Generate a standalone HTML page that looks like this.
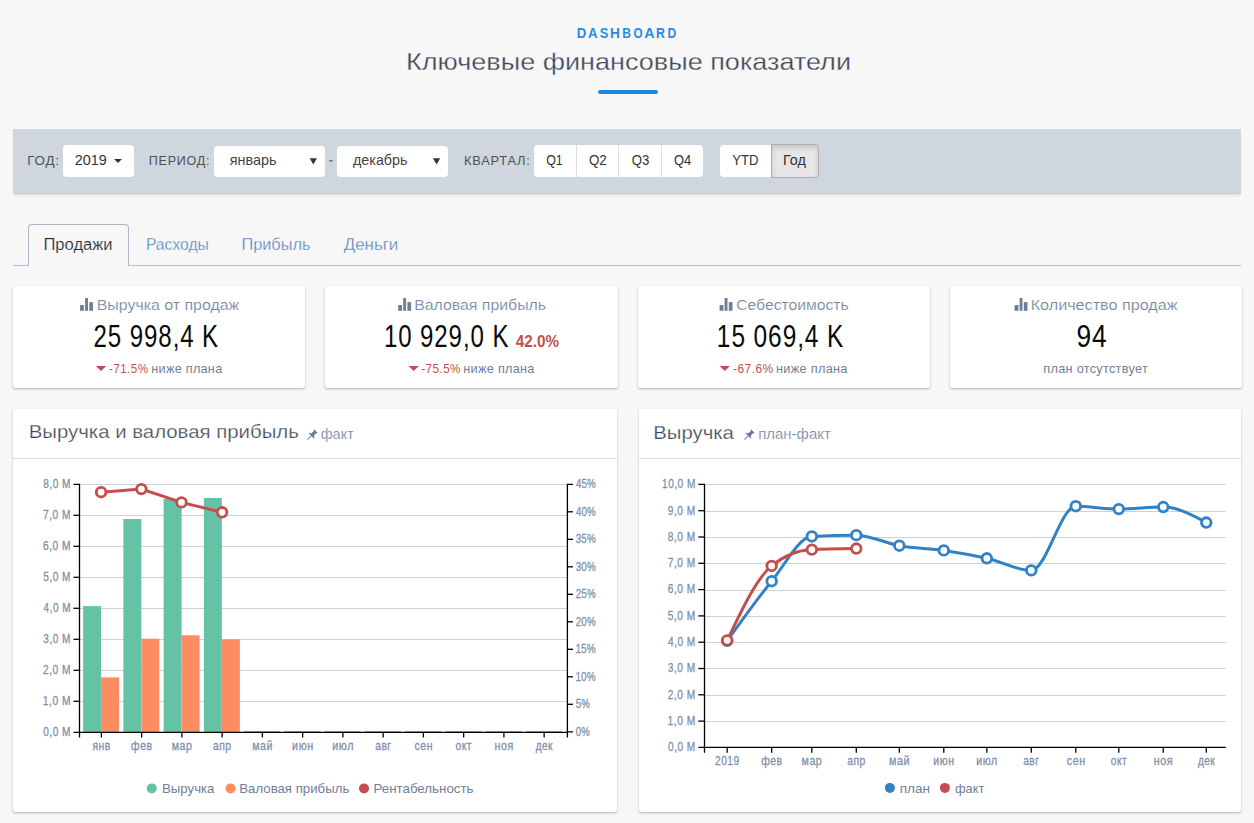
<!DOCTYPE html>
<html><head><meta charset="utf-8"><title>Dashboard</title>
<style>
html,body{margin:0;padding:0;width:1254px;height:823px;overflow:hidden;background:#f7f7f7;font-family:"Liberation Sans",sans-serif}
svg text{font-family:"Liberation Sans",sans-serif}
</style></head><body>
<div style="position:absolute;left:598px;top:90px;width:60px;height:4px;background:#1a86e0;border-radius:2px"></div>
<div style="position:absolute;left:13px;top:129px;width:1228px;height:65px;background:#cfd6dd;box-shadow:inset 0 -1px 0 rgba(0,0,0,.04), 0 3px 3px -1px rgba(0,0,0,.09)"></div>
<div style="position:absolute;left:63px;top:145px;width:71px;height:32px;background:#fff;border-radius:4px"></div>
<div style="position:absolute;left:214px;top:146px;width:111px;height:31px;background:#fff;border-radius:4px"></div>
<div style="position:absolute;left:337px;top:146px;width:111px;height:31px;background:#fff;border-radius:4px"></div>
<div style="position:absolute;left:534px;top:145px;width:169px;height:32px;background:#fff;border-radius:4px"></div>
<div style="position:absolute;left:576px;top:145px;width:1px;height:32px;background:#ddd"></div>
<div style="position:absolute;left:618px;top:145px;width:1px;height:32px;background:#ddd"></div>
<div style="position:absolute;left:661px;top:145px;width:1px;height:32px;background:#ddd"></div>
<div style="position:absolute;left:720px;top:145px;width:98px;height:32px;background:#fff;border-radius:4px"></div>
<div style="position:absolute;left:771px;top:144px;width:48px;height:34px;background:#e6e6e6;border:1px solid #adadad;border-radius:0 4px 4px 0;box-shadow:inset 0 3px 5px rgba(0,0,0,.125);box-sizing:border-box"></div>
<div style="position:absolute;left:13px;top:265px;width:1228px;height:1px;background:#b8c2cd"></div>
<div style="position:absolute;left:28px;top:224px;width:101px;height:42px;background:#f7f7f7;border:1px solid #aab6c3;border-bottom:none;border-radius:4px 4px 0 0;box-sizing:border-box"></div>
<div style="position:absolute;left:13.0px;top:286px;width:292.25px;height:102px;background:#fff;border-radius:2px;box-shadow:0 1px 3px rgba(0,0,0,.10), 0 1px 2px rgba(0,0,0,.20)"></div>
<div style="position:absolute;left:325.25px;top:286px;width:292.25px;height:102px;background:#fff;border-radius:2px;box-shadow:0 1px 3px rgba(0,0,0,.10), 0 1px 2px rgba(0,0,0,.20)"></div>
<div style="position:absolute;left:637.5px;top:286px;width:292.25px;height:102px;background:#fff;border-radius:2px;box-shadow:0 1px 3px rgba(0,0,0,.10), 0 1px 2px rgba(0,0,0,.20)"></div>
<div style="position:absolute;left:949.75px;top:286px;width:292.25px;height:102px;background:#fff;border-radius:2px;box-shadow:0 1px 3px rgba(0,0,0,.10), 0 1px 2px rgba(0,0,0,.20)"></div>
<div style="position:absolute;left:13px;top:409px;width:604px;height:403px;background:#fff;border-radius:2px;box-shadow:0 1px 3px rgba(0,0,0,.10), 0 1px 2px rgba(0,0,0,.20)"></div>
<div style="position:absolute;left:639px;top:409px;width:602px;height:403px;background:#fff;border-radius:2px;box-shadow:0 1px 3px rgba(0,0,0,.10), 0 1px 2px rgba(0,0,0,.20)"></div>
<div style="position:absolute;left:13px;top:458px;width:604px;height:1px;background:#dcdcdc"></div>
<div style="position:absolute;left:639px;top:458px;width:602px;height:1px;background:#dcdcdc"></div>
<svg width="1254" height="823" style="position:absolute;left:0;top:0">
<text x="576.86" y="37.90" font-size="14.00" fill="#2a8ae0" font-weight="bold" textLength="9.52" lengthAdjust="spacingAndGlyphs">D</text>
<text x="587.98" y="37.90" font-size="14.00" fill="#2a8ae0" font-weight="bold" textLength="9.58" lengthAdjust="spacingAndGlyphs">A</text>
<text x="599.72" y="37.90" font-size="14.00" fill="#2a8ae0" font-weight="bold" textLength="8.61" lengthAdjust="spacingAndGlyphs">S</text>
<text x="610.09" y="37.90" font-size="14.00" fill="#2a8ae0" font-weight="bold" textLength="9.88" lengthAdjust="spacingAndGlyphs">H</text>
<text x="622.14" y="37.90" font-size="14.00" fill="#2a8ae0" font-weight="bold" textLength="8.73" lengthAdjust="spacingAndGlyphs">B</text>
<text x="633.45" y="37.90" font-size="14.00" fill="#2a8ae0" font-weight="bold" textLength="9.08" lengthAdjust="spacingAndGlyphs">O</text>
<text x="644.21" y="37.90" font-size="14.00" fill="#2a8ae0" font-weight="bold" textLength="10.35" lengthAdjust="spacingAndGlyphs">A</text>
<text x="655.89" y="37.90" font-size="14.00" fill="#2a8ae0" font-weight="bold" textLength="8.93" lengthAdjust="spacingAndGlyphs">R</text>
<text x="667.41" y="37.90" font-size="14.00" fill="#2a8ae0" font-weight="bold" textLength="8.69" lengthAdjust="spacingAndGlyphs">D</text>
<text x="405.98" y="69.50" font-size="24.20" fill="#3d4858" stroke="#f7f7f7" stroke-width="0.3" textLength="445.05" lengthAdjust="spacingAndGlyphs">Ключевые финансовые показатели</text>
<text x="27.26" y="165.00" font-size="13.40" fill="#4d5259" letter-spacing="0.8" textLength="32.45" lengthAdjust="spacingAndGlyphs">ГОД:</text>
<text x="74.71" y="165.00" font-size="14.50" fill="#333" textLength="32.07" lengthAdjust="spacingAndGlyphs">2019</text>
<path d="M114 159 L122 159 L118 163 Z" fill="#333"/>
<text x="148.80" y="165.00" font-size="13.40" fill="#4d5259" letter-spacing="0.8" textLength="61.44" lengthAdjust="spacingAndGlyphs">ПЕРИОД:</text>
<text x="229.75" y="165.40" font-size="14.50" fill="#444" textLength="46.79" lengthAdjust="spacingAndGlyphs">январь</text>
<path d="M309.7 158.2 L316.9 158.2 L313.3 164.4 Z" fill="#333"/>
<rect x="329.2" y="160.2" width="3.4" height="1.2" fill="#555"/>
<text x="353.00" y="165.40" font-size="14.50" fill="#444" textLength="54.51" lengthAdjust="spacingAndGlyphs">декабрь</text>
<path d="M433 158.2 L440.2 158.2 L436.6 164.4 Z" fill="#333"/>
<text x="464.05" y="165.10" font-size="13.40" fill="#4d5259" letter-spacing="0.8" textLength="66.52" lengthAdjust="spacingAndGlyphs">КВАРТАЛ:</text>
<text x="546.21" y="165.10" font-size="14.50" fill="#333" textLength="16.58" lengthAdjust="spacingAndGlyphs">Q1</text>
<text x="588.96" y="165.10" font-size="14.50" fill="#333" textLength="17.82" lengthAdjust="spacingAndGlyphs">Q2</text>
<text x="631.71" y="165.10" font-size="14.50" fill="#333" textLength="17.57" lengthAdjust="spacingAndGlyphs">Q3</text>
<text x="673.98" y="165.10" font-size="14.50" fill="#333" textLength="17.27" lengthAdjust="spacingAndGlyphs">Q4</text>
<text x="732.24" y="165.10" font-size="14.50" fill="#333" textLength="26.29" lengthAdjust="spacingAndGlyphs">YTD</text>
<text x="782.94" y="165.10" font-size="14.50" fill="#333" textLength="22.86" lengthAdjust="spacingAndGlyphs">Год</text>
<text x="43.44" y="249.70" font-size="16.00" fill="#1f2530" stroke="#f7f7f7" stroke-width="0.2" textLength="69.13" lengthAdjust="spacingAndGlyphs">Продажи</text>
<text x="145.94" y="249.70" font-size="16.00" fill="#4d7dba" stroke="#f7f7f7" stroke-width="0.3" textLength="62.86" lengthAdjust="spacingAndGlyphs">Расходы</text>
<text x="241.45" y="249.70" font-size="16.00" fill="#4d7dba" stroke="#f7f7f7" stroke-width="0.3" textLength="69.06" lengthAdjust="spacingAndGlyphs">Прибыль</text>
<text x="343.74" y="249.70" font-size="16.00" fill="#4d7dba" stroke="#f7f7f7" stroke-width="0.3" textLength="54.55" lengthAdjust="spacingAndGlyphs">Деньги</text>
<g fill="#6d7f98"><rect x="80.1" y="305" width="3.8" height="5.8"/><rect x="85.1" y="298" width="2.9" height="12.8"/><rect x="89.3" y="302.1" width="3.7" height="8.7"/></g>
<text x="96.73" y="310.00" font-size="15.20" fill="#7489a6" stroke="#fff" stroke-width="0.15" textLength="142.53" lengthAdjust="spacingAndGlyphs">Выручка от продаж</text>
<text x="93.59" y="347.00" font-size="31.60" fill="#0a0a0a" letter-spacing="1.2" textLength="125.51" lengthAdjust="spacingAndGlyphs">25 998,4 K</text>
<path d="M95.8 366 L106.2 366 L101.0 371 Z" fill="#c0504d"/>
<text x="109.02" y="372.90" font-size="13.10" fill="#c0504d" letter-spacing="0.5" textLength="39.43" lengthAdjust="spacingAndGlyphs">-71.5%</text>
<text x="151.28" y="372.90" font-size="13.10" fill="#71809a" letter-spacing="0.3" textLength="71.19" lengthAdjust="spacingAndGlyphs">ниже плана</text>
<g fill="#6d7f98"><rect x="398.2" y="305" width="3.8" height="5.8"/><rect x="403.2" y="298" width="2.9" height="12.8"/><rect x="407.4" y="302.1" width="3.7" height="8.7"/></g>
<text x="414.23" y="310.00" font-size="15.20" fill="#7489a6" stroke="#fff" stroke-width="0.15" textLength="131.82" lengthAdjust="spacingAndGlyphs">Валовая прибыль</text>
<text x="383.88" y="347.00" font-size="31.60" fill="#0a0a0a" letter-spacing="1.2" textLength="125.47" lengthAdjust="spacingAndGlyphs">10 929,0 K</text>
<text x="515.75" y="346.80" font-size="16.40" fill="#c0504d" font-weight="bold" textLength="43.27" lengthAdjust="spacingAndGlyphs">42.0%</text>
<path d="M408.5 366 L418.9 366 L413.7 371 Z" fill="#c0504d"/>
<text x="421.27" y="372.90" font-size="13.10" fill="#c0504d" letter-spacing="0.5" textLength="39.67" lengthAdjust="spacingAndGlyphs">-75.5%</text>
<text x="463.28" y="372.90" font-size="13.10" fill="#71809a" letter-spacing="0.3" textLength="71.45" lengthAdjust="spacingAndGlyphs">ниже плана</text>
<g fill="#6d7f98"><rect x="719.6" y="305" width="3.8" height="5.8"/><rect x="724.6" y="298" width="2.9" height="12.8"/><rect x="728.8" y="302.1" width="3.7" height="8.7"/></g>
<text x="736.24" y="310.00" font-size="15.20" fill="#7489a6" stroke="#fff" stroke-width="0.15" textLength="112.51" lengthAdjust="spacingAndGlyphs">Себестоимость</text>
<text x="716.87" y="347.00" font-size="31.60" fill="#0a0a0a" letter-spacing="1.2" textLength="127.47" lengthAdjust="spacingAndGlyphs">15 069,4 K</text>
<path d="M719.6 366 L730.0 366 L724.8 371 Z" fill="#c0504d"/>
<text x="733.02" y="372.90" font-size="13.10" fill="#c0504d" letter-spacing="0.5" textLength="40.68" lengthAdjust="spacingAndGlyphs">-67.6%</text>
<text x="776.02" y="372.90" font-size="13.10" fill="#71809a" letter-spacing="0.3" textLength="71.70" lengthAdjust="spacingAndGlyphs">ниже плана</text>
<g fill="#6d7f98"><rect x="1014.6" y="305" width="3.8" height="5.8"/><rect x="1019.6" y="298" width="2.9" height="12.8"/><rect x="1023.8" y="302.1" width="3.7" height="8.7"/></g>
<text x="1030.73" y="310.00" font-size="15.20" fill="#7489a6" stroke="#fff" stroke-width="0.15" textLength="146.75" lengthAdjust="spacingAndGlyphs">Количество продаж</text>
<text x="1076.48" y="347.00" font-size="31.60" fill="#0a0a0a" letter-spacing="1.2" textLength="31.27" lengthAdjust="spacingAndGlyphs">94</text>
<text x="1043.28" y="372.90" font-size="13.10" fill="#71809a" letter-spacing="0.3" textLength="104.77" lengthAdjust="spacingAndGlyphs">план отсутствует</text>
<text x="28.73" y="438.40" font-size="17.60" fill="#3d4858" stroke="#fff" stroke-width="0.25" textLength="270.06" lengthAdjust="spacingAndGlyphs">Выручка и валовая прибыль</text>
<g fill="#6a7d98" transform="translate(307.5,439.6) rotate(45)"><rect x="-0.5" y="-5.8" width="1" height="5.8"/><path d="M-3.6 -5.3 L3.6 -5.3 L3.6 -6.2 L1.7 -7.3 L1.7 -10.6 L2.7 -12 L-2.7 -12 L-1.7 -10.6 L-1.7 -7.3 L-3.6 -6.2 Z"/></g>
<text x="320.73" y="438.60" font-size="14.20" fill="#71809a" stroke="#fff" stroke-width="0.2" textLength="33.04" lengthAdjust="spacingAndGlyphs">факт</text>
<text x="653.21" y="439.20" font-size="18.60" fill="#3d4858" stroke="#fff" stroke-width="0.25" textLength="80.74" lengthAdjust="spacingAndGlyphs">Выручка</text>
<g fill="#6a7d98" transform="translate(744.4,439.6) rotate(45)"><rect x="-0.5" y="-5.8" width="1" height="5.8"/><path d="M-3.6 -5.3 L3.6 -5.3 L3.6 -6.2 L1.7 -7.3 L1.7 -10.6 L2.7 -12 L-2.7 -12 L-1.7 -10.6 L-1.7 -7.3 L-3.6 -6.2 Z"/></g>
<text x="758.23" y="439.20" font-size="14.20" fill="#71809a" stroke="#fff" stroke-width="0.2" textLength="72.56" lengthAdjust="spacingAndGlyphs">план-факт</text>
<g shape-rendering="crispEdges">
<line x1="80" y1="701.5" x2="567" y2="701.5" stroke="#ced1d8" stroke-width="1"/>
<line x1="80" y1="670.5" x2="567" y2="670.5" stroke="#ced1d8" stroke-width="1"/>
<line x1="80" y1="639.5" x2="567" y2="639.5" stroke="#ced1d8" stroke-width="1"/>
<line x1="80" y1="608.5" x2="567" y2="608.5" stroke="#ced1d8" stroke-width="1"/>
<line x1="80" y1="577.5" x2="567" y2="577.5" stroke="#ced1d8" stroke-width="1"/>
<line x1="80" y1="546.5" x2="567" y2="546.5" stroke="#ced1d8" stroke-width="1"/>
<line x1="80" y1="515.5" x2="567" y2="515.5" stroke="#ced1d8" stroke-width="1"/>
<line x1="80" y1="484.5" x2="567" y2="484.5" stroke="#ced1d8" stroke-width="1"/>
</g>
<rect x="83.10" y="606.13" width="18" height="126.17" fill="#66c2a5"/>
<rect x="101.10" y="677.43" width="18" height="54.87" fill="#fc8d62"/>
<rect x="123.35" y="519.02" width="18" height="213.28" fill="#66c2a5"/>
<rect x="141.35" y="638.68" width="18" height="93.62" fill="#fc8d62"/>
<rect x="163.60" y="498.87" width="18" height="233.43" fill="#66c2a5"/>
<rect x="181.60" y="635.27" width="18" height="97.03" fill="#fc8d62"/>
<rect x="203.85" y="497.94" width="18" height="234.36" fill="#66c2a5"/>
<rect x="221.85" y="639.30" width="18" height="93.00" fill="#fc8d62"/>
<rect x="244.10" y="731.00" width="18" height="1.3" fill="#66c2a5"/>
<rect x="262.10" y="731.00" width="18" height="1.3" fill="#fc8d62"/>
<rect x="284.35" y="731.00" width="18" height="1.3" fill="#66c2a5"/>
<rect x="302.35" y="731.00" width="18" height="1.3" fill="#fc8d62"/>
<rect x="324.60" y="731.00" width="18" height="1.3" fill="#66c2a5"/>
<rect x="342.60" y="731.00" width="18" height="1.3" fill="#fc8d62"/>
<rect x="364.85" y="731.00" width="18" height="1.3" fill="#66c2a5"/>
<rect x="382.85" y="731.00" width="18" height="1.3" fill="#fc8d62"/>
<rect x="405.10" y="731.00" width="18" height="1.3" fill="#66c2a5"/>
<rect x="423.10" y="731.00" width="18" height="1.3" fill="#fc8d62"/>
<rect x="445.35" y="731.00" width="18" height="1.3" fill="#66c2a5"/>
<rect x="463.35" y="731.00" width="18" height="1.3" fill="#fc8d62"/>
<rect x="485.60" y="731.00" width="18" height="1.3" fill="#66c2a5"/>
<rect x="503.60" y="731.00" width="18" height="1.3" fill="#fc8d62"/>
<rect x="525.85" y="731.00" width="18" height="1.3" fill="#66c2a5"/>
<rect x="543.85" y="731.00" width="18" height="1.3" fill="#fc8d62"/>
<g stroke="#000" stroke-width="1.3" fill="none">
<path d="M73.5 484.30 H79.5 V732.30 H73.5"/>
<path d="M73.5 701.30 H79.5"/>
<path d="M73.5 670.30 H79.5"/>
<path d="M73.5 639.30 H79.5"/>
<path d="M73.5 608.30 H79.5"/>
<path d="M73.5 577.30 H79.5"/>
<path d="M73.5 546.30 H79.5"/>
<path d="M73.5 515.30 H79.5"/>
<path d="M79.5 737.5 V732.30 H567.4 V737.5"/>
<path d="M101.40 732.30 V737.5"/>
<path d="M141.65 732.30 V737.5"/>
<path d="M181.90 732.30 V737.5"/>
<path d="M222.15 732.30 V737.5"/>
<path d="M262.40 732.30 V737.5"/>
<path d="M302.65 732.30 V737.5"/>
<path d="M342.90 732.30 V737.5"/>
<path d="M383.15 732.30 V737.5"/>
<path d="M423.40 732.30 V737.5"/>
<path d="M463.65 732.30 V737.5"/>
<path d="M503.90 732.30 V737.5"/>
<path d="M544.15 732.30 V737.5"/>
<path d="M573 484.30 H567.4 V731.80 H573"/>
<path d="M567.4 704.30 H573"/>
<path d="M567.4 676.80 H573"/>
<path d="M567.4 649.30 H573"/>
<path d="M567.4 621.80 H573"/>
<path d="M567.4 594.30 H573"/>
<path d="M567.4 566.80 H573"/>
<path d="M567.4 539.30 H573"/>
<path d="M567.4 511.80 H573"/>
</g>
<text x="43.37" y="736.10" font-size="12.40" fill="#8090aa" letter-spacing="0.6" stroke="#8090aa" stroke-width="0.3" textLength="27.58" lengthAdjust="spacingAndGlyphs">0,0 M</text>
<text x="42.87" y="705.10" font-size="12.40" fill="#8090aa" letter-spacing="0.6" stroke="#8090aa" stroke-width="0.3" textLength="28.11" lengthAdjust="spacingAndGlyphs">1,0 M</text>
<text x="43.12" y="674.10" font-size="12.40" fill="#8090aa" letter-spacing="0.6" stroke="#8090aa" stroke-width="0.3" textLength="27.84" lengthAdjust="spacingAndGlyphs">2,0 M</text>
<text x="43.37" y="643.10" font-size="12.40" fill="#8090aa" letter-spacing="0.6" stroke="#8090aa" stroke-width="0.3" textLength="27.58" lengthAdjust="spacingAndGlyphs">3,0 M</text>
<text x="43.62" y="612.10" font-size="12.40" fill="#8090aa" letter-spacing="0.6" stroke="#8090aa" stroke-width="0.3" textLength="27.31" lengthAdjust="spacingAndGlyphs">4,0 M</text>
<text x="43.37" y="581.10" font-size="12.40" fill="#8090aa" letter-spacing="0.6" stroke="#8090aa" stroke-width="0.3" textLength="27.58" lengthAdjust="spacingAndGlyphs">5,0 M</text>
<text x="43.12" y="550.10" font-size="12.40" fill="#8090aa" letter-spacing="0.6" stroke="#8090aa" stroke-width="0.3" textLength="27.84" lengthAdjust="spacingAndGlyphs">6,0 M</text>
<text x="43.12" y="519.10" font-size="12.40" fill="#8090aa" letter-spacing="0.6" stroke="#8090aa" stroke-width="0.3" textLength="27.84" lengthAdjust="spacingAndGlyphs">7,0 M</text>
<text x="43.37" y="488.10" font-size="12.40" fill="#8090aa" letter-spacing="0.6" stroke="#8090aa" stroke-width="0.3" textLength="27.58" lengthAdjust="spacingAndGlyphs">8,0 M</text>
<text x="575.72" y="735.60" font-size="12.40" fill="#8090aa" letter-spacing="0.15" stroke="#8090aa" stroke-width="0.3" textLength="14.12" lengthAdjust="spacingAndGlyphs">0%</text>
<text x="575.72" y="708.10" font-size="12.40" fill="#8090aa" letter-spacing="0.15" stroke="#8090aa" stroke-width="0.3" textLength="14.12" lengthAdjust="spacingAndGlyphs">5%</text>
<text x="575.45" y="680.60" font-size="12.40" fill="#8090aa" letter-spacing="0.15" stroke="#8090aa" stroke-width="0.3" textLength="20.30" lengthAdjust="spacingAndGlyphs">10%</text>
<text x="575.45" y="653.10" font-size="12.40" fill="#8090aa" letter-spacing="0.15" stroke="#8090aa" stroke-width="0.3" textLength="20.30" lengthAdjust="spacingAndGlyphs">15%</text>
<text x="575.72" y="625.60" font-size="12.40" fill="#8090aa" letter-spacing="0.15" stroke="#8090aa" stroke-width="0.3" textLength="20.01" lengthAdjust="spacingAndGlyphs">20%</text>
<text x="575.72" y="598.10" font-size="12.40" fill="#8090aa" letter-spacing="0.15" stroke="#8090aa" stroke-width="0.3" textLength="20.01" lengthAdjust="spacingAndGlyphs">25%</text>
<text x="575.73" y="570.60" font-size="12.40" fill="#8090aa" letter-spacing="0.15" stroke="#8090aa" stroke-width="0.3" textLength="20.00" lengthAdjust="spacingAndGlyphs">30%</text>
<text x="575.73" y="543.10" font-size="12.40" fill="#8090aa" letter-spacing="0.15" stroke="#8090aa" stroke-width="0.3" textLength="20.00" lengthAdjust="spacingAndGlyphs">35%</text>
<text x="575.99" y="515.60" font-size="12.40" fill="#8090aa" letter-spacing="0.15" stroke="#8090aa" stroke-width="0.3" textLength="19.74" lengthAdjust="spacingAndGlyphs">40%</text>
<text x="575.99" y="488.10" font-size="12.40" fill="#8090aa" letter-spacing="0.15" stroke="#8090aa" stroke-width="0.3" textLength="19.74" lengthAdjust="spacingAndGlyphs">45%</text>
<text x="92.44" y="749.70" font-size="12.40" fill="#8090aa" letter-spacing="0.6" stroke="#8090aa" stroke-width="0.3" textLength="18.42" lengthAdjust="spacingAndGlyphs">янв</text>
<text x="131.11" y="749.70" font-size="12.40" fill="#8090aa" letter-spacing="0.6" stroke="#8090aa" stroke-width="0.3" textLength="21.33" lengthAdjust="spacingAndGlyphs">фев</text>
<text x="171.67" y="749.70" font-size="12.40" fill="#8090aa" letter-spacing="0.6" stroke="#8090aa" stroke-width="0.3" textLength="20.72" lengthAdjust="spacingAndGlyphs">мар</text>
<text x="212.92" y="749.70" font-size="12.40" fill="#8090aa" letter-spacing="0.6" stroke="#8090aa" stroke-width="0.3" textLength="18.69" lengthAdjust="spacingAndGlyphs">апр</text>
<text x="252.17" y="749.70" font-size="12.40" fill="#8090aa" letter-spacing="0.6" stroke="#8090aa" stroke-width="0.3" textLength="20.75" lengthAdjust="spacingAndGlyphs">май</text>
<text x="292.11" y="749.70" font-size="12.40" fill="#8090aa" letter-spacing="0.6" stroke="#8090aa" stroke-width="0.3" textLength="21.59" lengthAdjust="spacingAndGlyphs">июн</text>
<text x="332.36" y="749.70" font-size="12.40" fill="#8090aa" letter-spacing="0.6" stroke="#8090aa" stroke-width="0.3" textLength="21.59" lengthAdjust="spacingAndGlyphs">июл</text>
<text x="375.20" y="749.70" font-size="12.40" fill="#8090aa" letter-spacing="0.6" stroke="#8090aa" stroke-width="0.3" textLength="16.41" lengthAdjust="spacingAndGlyphs">авг</text>
<text x="414.57" y="749.70" font-size="12.40" fill="#8090aa" letter-spacing="0.6" stroke="#8090aa" stroke-width="0.3" textLength="18.39" lengthAdjust="spacingAndGlyphs">сен</text>
<text x="455.57" y="749.70" font-size="12.40" fill="#8090aa" letter-spacing="0.6" stroke="#8090aa" stroke-width="0.3" textLength="16.38" lengthAdjust="spacingAndGlyphs">окт</text>
<text x="494.52" y="749.70" font-size="12.40" fill="#8090aa" letter-spacing="0.6" stroke="#8090aa" stroke-width="0.3" textLength="19.27" lengthAdjust="spacingAndGlyphs">ноя</text>
<text x="535.73" y="749.70" font-size="12.40" fill="#8090aa" letter-spacing="0.6" stroke="#8090aa" stroke-width="0.3" textLength="17.24" lengthAdjust="spacingAndGlyphs">дек</text>
<path d="M101.1 492.2 L141.4 489.1 L181.5 502.4 L222.1 512.3" fill="none" stroke="#c44e4e" stroke-width="3"/>
<circle cx="101.1" cy="492.2" r="4.8" fill="#fff" stroke="#c44e4e" stroke-width="2.8"/>
<circle cx="141.4" cy="489.1" r="4.8" fill="#fff" stroke="#c44e4e" stroke-width="2.8"/>
<circle cx="181.5" cy="502.4" r="4.8" fill="#fff" stroke="#c44e4e" stroke-width="2.8"/>
<circle cx="222.1" cy="512.3" r="4.8" fill="#fff" stroke="#c44e4e" stroke-width="2.8"/>
<circle cx="151.8" cy="788.4" r="5" fill="#66c2a5"/>
<text x="161.98" y="793.00" font-size="13.40" fill="#71809a" textLength="52.49" lengthAdjust="spacingAndGlyphs">Выручка</text>
<circle cx="230.6" cy="788.4" r="5" fill="#fc8d62"/>
<text x="239.24" y="793.00" font-size="13.40" fill="#71809a" textLength="110.05" lengthAdjust="spacingAndGlyphs">Валовая прибыль</text>
<circle cx="364" cy="788.4" r="5" fill="#c44e4e"/>
<text x="373.48" y="793.00" font-size="13.40" fill="#71809a" textLength="100.04" lengthAdjust="spacingAndGlyphs">Рентабельность</text>
<g shape-rendering="crispEdges">
<line x1="705" y1="721.5" x2="1225.7" y2="721.5" stroke="#ced1d8" stroke-width="1"/>
<line x1="705" y1="695.5" x2="1225.7" y2="695.5" stroke="#ced1d8" stroke-width="1"/>
<line x1="705" y1="668.5" x2="1225.7" y2="668.5" stroke="#ced1d8" stroke-width="1"/>
<line x1="705" y1="642.5" x2="1225.7" y2="642.5" stroke="#ced1d8" stroke-width="1"/>
<line x1="705" y1="616.5" x2="1225.7" y2="616.5" stroke="#ced1d8" stroke-width="1"/>
<line x1="705" y1="590.5" x2="1225.7" y2="590.5" stroke="#ced1d8" stroke-width="1"/>
<line x1="705" y1="563.5" x2="1225.7" y2="563.5" stroke="#ced1d8" stroke-width="1"/>
<line x1="705" y1="537.5" x2="1225.7" y2="537.5" stroke="#ced1d8" stroke-width="1"/>
<line x1="705" y1="511.5" x2="1225.7" y2="511.5" stroke="#ced1d8" stroke-width="1"/>
<line x1="705" y1="484.5" x2="1225.7" y2="484.5" stroke="#ced1d8" stroke-width="1"/>
</g>
<g stroke="#000" stroke-width="1.3" fill="none">
<path d="M698.3 484.40 H704.5 V747.40 H698.3"/>
<path d="M698.3 721.10 H704.5"/>
<path d="M698.3 694.80 H704.5"/>
<path d="M698.3 668.50 H704.5"/>
<path d="M698.3 642.20 H704.5"/>
<path d="M698.3 615.90 H704.5"/>
<path d="M698.3 589.60 H704.5"/>
<path d="M698.3 563.30 H704.5"/>
<path d="M698.3 537.00 H704.5"/>
<path d="M698.3 510.70 H704.5"/>
<path d="M704.5 752.8 V747.40 H1225.8"/>
<path d="M727.20 747.40 V752.8"/>
<path d="M771.67 747.40 V752.8"/>
<path d="M811.83 747.40 V752.8"/>
<path d="M856.30 747.40 V752.8"/>
<path d="M899.33 747.40 V752.8"/>
<path d="M943.79 747.40 V752.8"/>
<path d="M986.83 747.40 V752.8"/>
<path d="M1031.29 747.40 V752.8"/>
<path d="M1075.76 747.40 V752.8"/>
<path d="M1118.79 747.40 V752.8"/>
<path d="M1163.26 747.40 V752.8"/>
<path d="M1206.29 747.40 V752.8"/>
</g>
<text x="668.12" y="751.20" font-size="12.40" fill="#8090aa" letter-spacing="0.6" stroke="#8090aa" stroke-width="0.3" textLength="27.58" lengthAdjust="spacingAndGlyphs">0,0 M</text>
<text x="667.62" y="724.90" font-size="12.40" fill="#8090aa" letter-spacing="0.6" stroke="#8090aa" stroke-width="0.3" textLength="28.11" lengthAdjust="spacingAndGlyphs">1,0 M</text>
<text x="667.87" y="698.60" font-size="12.40" fill="#8090aa" letter-spacing="0.6" stroke="#8090aa" stroke-width="0.3" textLength="27.84" lengthAdjust="spacingAndGlyphs">2,0 M</text>
<text x="667.87" y="672.30" font-size="12.40" fill="#8090aa" letter-spacing="0.6" stroke="#8090aa" stroke-width="0.3" textLength="27.84" lengthAdjust="spacingAndGlyphs">3,0 M</text>
<text x="668.12" y="646.00" font-size="12.40" fill="#8090aa" letter-spacing="0.6" stroke="#8090aa" stroke-width="0.3" textLength="27.58" lengthAdjust="spacingAndGlyphs">4,0 M</text>
<text x="667.87" y="619.70" font-size="12.40" fill="#8090aa" letter-spacing="0.6" stroke="#8090aa" stroke-width="0.3" textLength="27.84" lengthAdjust="spacingAndGlyphs">5,0 M</text>
<text x="667.87" y="593.40" font-size="12.40" fill="#8090aa" letter-spacing="0.6" stroke="#8090aa" stroke-width="0.3" textLength="27.84" lengthAdjust="spacingAndGlyphs">6,0 M</text>
<text x="667.87" y="567.10" font-size="12.40" fill="#8090aa" letter-spacing="0.6" stroke="#8090aa" stroke-width="0.3" textLength="27.84" lengthAdjust="spacingAndGlyphs">7,0 M</text>
<text x="667.87" y="540.80" font-size="12.40" fill="#8090aa" letter-spacing="0.6" stroke="#8090aa" stroke-width="0.3" textLength="27.84" lengthAdjust="spacingAndGlyphs">8,0 M</text>
<text x="667.87" y="514.50" font-size="12.40" fill="#8090aa" letter-spacing="0.6" stroke="#8090aa" stroke-width="0.3" textLength="27.84" lengthAdjust="spacingAndGlyphs">9,0 M</text>
<text x="662.07" y="488.20" font-size="12.40" fill="#8090aa" letter-spacing="0.6" stroke="#8090aa" stroke-width="0.3" textLength="33.75" lengthAdjust="spacingAndGlyphs">10,0 M</text>
<text x="715.02" y="764.70" font-size="12.40" fill="#8090aa" letter-spacing="0.6" stroke="#8090aa" stroke-width="0.3" textLength="24.60" lengthAdjust="spacingAndGlyphs">2019</text>
<text x="761.19" y="764.70" font-size="12.40" fill="#8090aa" letter-spacing="0.6" stroke="#8090aa" stroke-width="0.3" textLength="21.33" lengthAdjust="spacingAndGlyphs">фев</text>
<text x="801.56" y="764.70" font-size="12.40" fill="#8090aa" letter-spacing="0.6" stroke="#8090aa" stroke-width="0.3" textLength="20.72" lengthAdjust="spacingAndGlyphs">мар</text>
<text x="847.15" y="764.70" font-size="12.40" fill="#8090aa" letter-spacing="0.6" stroke="#8090aa" stroke-width="0.3" textLength="18.70" lengthAdjust="spacingAndGlyphs">апр</text>
<text x="889.04" y="764.70" font-size="12.40" fill="#8090aa" letter-spacing="0.6" stroke="#8090aa" stroke-width="0.3" textLength="21.03" lengthAdjust="spacingAndGlyphs">май</text>
<text x="933.35" y="764.70" font-size="12.40" fill="#8090aa" letter-spacing="0.6" stroke="#8090aa" stroke-width="0.3" textLength="21.31" lengthAdjust="spacingAndGlyphs">июн</text>
<text x="976.25" y="764.70" font-size="12.40" fill="#8090aa" letter-spacing="0.6" stroke="#8090aa" stroke-width="0.3" textLength="21.59" lengthAdjust="spacingAndGlyphs">июл</text>
<text x="1023.17" y="764.70" font-size="12.40" fill="#8090aa" letter-spacing="0.6" stroke="#8090aa" stroke-width="0.3" textLength="16.41" lengthAdjust="spacingAndGlyphs">авг</text>
<text x="1066.86" y="764.70" font-size="12.40" fill="#8090aa" letter-spacing="0.6" stroke="#8090aa" stroke-width="0.3" textLength="18.67" lengthAdjust="spacingAndGlyphs">сен</text>
<text x="1110.78" y="764.70" font-size="12.40" fill="#8090aa" letter-spacing="0.6" stroke="#8090aa" stroke-width="0.3" textLength="16.38" lengthAdjust="spacingAndGlyphs">окт</text>
<text x="1153.81" y="764.70" font-size="12.40" fill="#8090aa" letter-spacing="0.6" stroke="#8090aa" stroke-width="0.3" textLength="19.26" lengthAdjust="spacingAndGlyphs">ноя</text>
<text x="1197.93" y="764.70" font-size="12.40" fill="#8090aa" letter-spacing="0.6" stroke="#8090aa" stroke-width="0.3" textLength="17.23" lengthAdjust="spacingAndGlyphs">дек</text>
<path d="M727.20,640.88C742.02,620.09,756.84,599.30,771.67,581.18C785.05,564.82,798.44,537.27,811.83,536.47C826.65,535.60,841.47,535.16,856.30,535.16C870.64,535.16,884.98,543.15,899.33,545.68C914.15,548.30,928.97,548.26,943.79,550.41C958.14,552.50,972.48,555.05,986.83,558.30C1001.65,561.67,1016.47,570.40,1031.29,570.40C1046.11,570.40,1060.94,506.23,1075.76,506.23C1090.10,506.23,1104.45,509.12,1118.79,509.12C1133.61,509.12,1148.44,507.02,1163.26,507.02C1177.60,507.02,1191.95,514.78,1206.29,522.53" fill="none" stroke="#3182c4" stroke-width="3"/>
<circle cx="727.20" cy="640.88" r="4.8" fill="#fff" stroke="#3182c4" stroke-width="2.8"/>
<circle cx="771.67" cy="581.18" r="4.8" fill="#fff" stroke="#3182c4" stroke-width="2.8"/>
<circle cx="811.83" cy="536.47" r="4.8" fill="#fff" stroke="#3182c4" stroke-width="2.8"/>
<circle cx="856.30" cy="535.16" r="4.8" fill="#fff" stroke="#3182c4" stroke-width="2.8"/>
<circle cx="899.33" cy="545.68" r="4.8" fill="#fff" stroke="#3182c4" stroke-width="2.8"/>
<circle cx="943.79" cy="550.41" r="4.8" fill="#fff" stroke="#3182c4" stroke-width="2.8"/>
<circle cx="986.83" cy="558.30" r="4.8" fill="#fff" stroke="#3182c4" stroke-width="2.8"/>
<circle cx="1031.29" cy="570.40" r="4.8" fill="#fff" stroke="#3182c4" stroke-width="2.8"/>
<circle cx="1075.76" cy="506.23" r="4.8" fill="#fff" stroke="#3182c4" stroke-width="2.8"/>
<circle cx="1118.79" cy="509.12" r="4.8" fill="#fff" stroke="#3182c4" stroke-width="2.8"/>
<circle cx="1163.26" cy="507.02" r="4.8" fill="#fff" stroke="#3182c4" stroke-width="2.8"/>
<circle cx="1206.29" cy="522.53" r="4.8" fill="#fff" stroke="#3182c4" stroke-width="2.8"/>
<path d="M727.20,640.36C742.02,609.16,756.84,577.97,771.67,565.93C785.05,555.06,798.44,550.26,811.83,549.62C826.65,548.92,841.47,548.75,856.30,548.57" fill="none" stroke="#c44e4e" stroke-width="3"/>
<circle cx="727.20" cy="640.36" r="4.8" fill="#fff" stroke="#c44e4e" stroke-width="2.8"/>
<circle cx="771.67" cy="565.93" r="4.8" fill="#fff" stroke="#c44e4e" stroke-width="2.8"/>
<circle cx="811.83" cy="549.62" r="4.8" fill="#fff" stroke="#c44e4e" stroke-width="2.8"/>
<circle cx="856.30" cy="548.57" r="4.8" fill="#fff" stroke="#c44e4e" stroke-width="2.8"/>
<circle cx="889.9" cy="787.9" r="5" fill="#3182c4"/>
<text x="899.70" y="792.60" font-size="13.40" fill="#71809a" textLength="30.34" lengthAdjust="spacingAndGlyphs">план</text>
<circle cx="944.9" cy="787.9" r="5" fill="#c44e4e"/>
<text x="954.99" y="792.60" font-size="13.40" fill="#71809a" textLength="29.28" lengthAdjust="spacingAndGlyphs">факт</text>
</svg>
</body></html>
